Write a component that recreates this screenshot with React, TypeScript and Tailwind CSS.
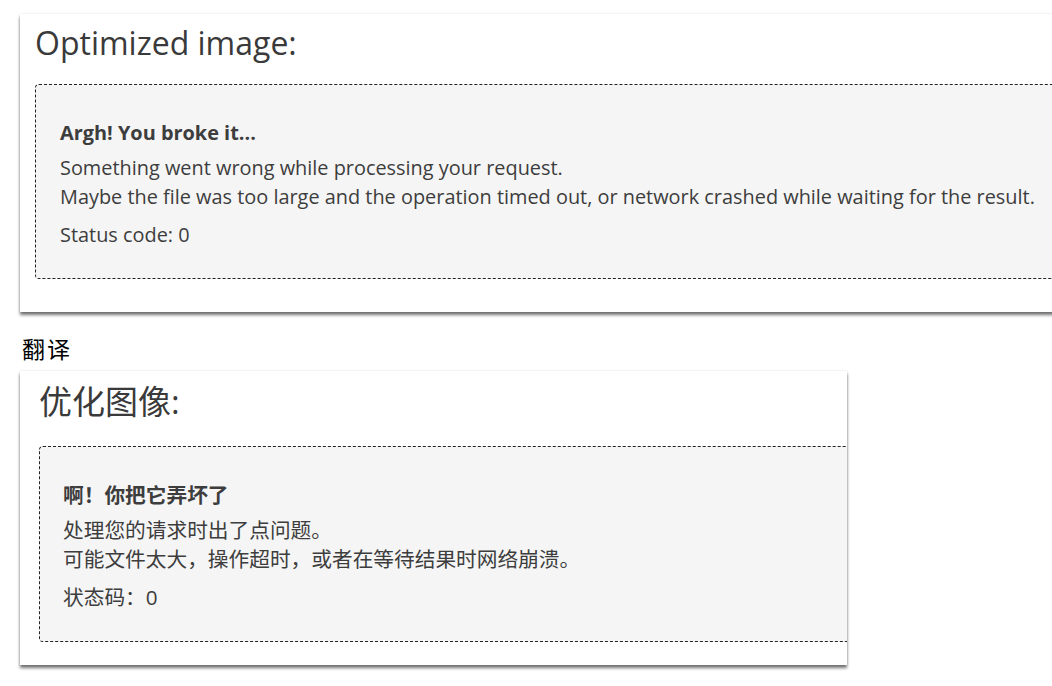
const sans = "font-['Open_Sans','Noto_Sans_CJK_SC',sans-serif]";

function ErrorCard({
  title,
  heading,
  lines,
  status,
  className,
  titleClass,
  boxClass,
  statusClass,
}: {
  title: string;
  heading: string;
  lines: string[];
  status: string;
  className: string;
  titleClass: string;
  boxClass: string;
  statusClass: string;
}) {
  return (
    <div className={`bg-white overflow-hidden shadow-[0_3px_3px_rgba(0,0,0,0.55),0_0_2px_rgba(0,0,0,0.12)] ${className}`}>
      <h2 className={`leading-[40px] text-[#3a3a3a] ${titleClass}`}>{title}</h2>
      <div className={`w-[1040px] rounded-[4px] border border-dashed border-[#222] bg-[#f5f5f5] leading-[29px] text-[#3d3d3d] ${boxClass}`}>
        <p className="font-bold">{heading}</p>
        <p className="mt-[6px]">
          {lines[0]}
          <br />
          {lines[1]}
        </p>
        <p className={statusClass}>{status}</p>
      </div>
    </div>
  );
}

export default function App() {
  return (
    <div className={`w-[1052px] h-[686px] overflow-hidden bg-white ${sans}`}>
      <div className="pt-[14px] pl-[20px]">
        <ErrorCard
          className="w-[1100px] pl-[15px] pt-[9px] pb-[33px]"
          titleClass="text-[32px]"
          boxClass="mt-[21px] pl-[24px] pt-[33px] pb-[29px] text-[19.9px]"
          statusClass="mt-[9px]"
          title="Optimized image:"
          heading="Argh! You broke it..."
          lines={[
            "Something went wrong while processing your request.",
            "Maybe the file was too large and the operation timed out, or network crashed while waiting for the result.",
          ]}
          status="Status code: 0"
        />
      </div>
      <p className="mt-[21px] pl-[22px] text-[23px] leading-[30px] tracking-[2px] text-black font-['Noto_Sans_CJK_SC',sans-serif]">
        翻译
      </p>
      <div className="mt-[8px] pl-[20px]">
        <ErrorCard
          className="w-[827px] pl-[19px] pt-[11px] pb-[23px]"
          titleClass="text-[33px]"
          boxClass="mt-[24px] pl-[23px] pt-[34px] pb-[29px] text-[20.7px]"
          statusClass="mt-[9px]"
          title="优化图像:"
          heading="啊！你把它弄坏了"
          lines={[
            "处理您的请求时出了点问题。",
            "可能文件太大，操作超时，或者在等待结果时网络崩溃。",
          ]}
          status="状态码：0"
        />
      </div>
    </div>
  );
}
